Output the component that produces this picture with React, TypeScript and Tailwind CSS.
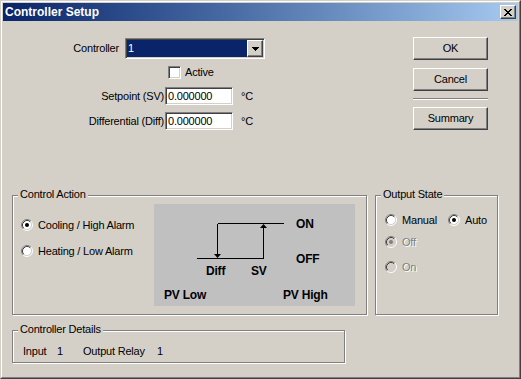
import React from "react";

const sunken =
  "border border-t-[#808080] border-l-[#808080] border-r-white border-b-white shadow-[inset_1px_1px_0_#404040,inset_-1px_-1px_0_#d4d0c8]";
const raised =
  "border border-t-white border-l-white border-r-[#404040] border-b-[#404040] shadow-[inset_-1px_-1px_0_#808080] bg-[#d4d0c8]";

function Radio({ checked, disabled }: { checked?: boolean; disabled?: boolean }) {
  return (
    <svg width="12" height="12" viewBox="0 0 12 12" className="shrink-0">
      <circle cx="6" cy="6" r="4.5" fill={disabled ? "#d4d0c8" : "#fff"} />
      <path d="M2.11 9.89 A5.5 5.5 0 0 1 9.89 2.11" stroke="#808080" fill="none" />
      <path d="M9.89 2.11 A5.5 5.5 0 0 1 2.11 9.89" stroke="#fff" fill="none" />
      <path d="M2.82 9.18 A4.5 4.5 0 0 1 9.18 2.82" stroke="#404040" fill="none" />
      <path d="M9.18 2.82 A4.5 4.5 0 0 1 2.82 9.18" stroke="#d4d0c8" fill="none" />
      {checked && <circle cx="6" cy="6" r="2" fill={disabled ? "#808080" : "#000"} />}
    </svg>
  );
}

function Button({ children }: { children: React.ReactNode }) {
  return (
    <div className={`w-[75px] h-[23px] flex items-center justify-center ${raised}`}>{children}</div>
  );
}

function Group({
  label,
  className,
  children,
}: {
  label: string;
  className: string;
  children?: React.ReactNode;
}) {
  return (
    <div
      className={`relative border border-[#808080] shadow-[inset_1px_1px_0_#fff,1px_1px_0_#fff] ${className}`}
    >
      <div className="absolute left-[5px] -top-[8px] px-[2px] leading-[13px] bg-[#d4d0c8]">{label}</div>
      {children}
    </div>
  );
}

function Disabled({ children }: { children: React.ReactNode }) {
  return <span className="text-[#808080] [text-shadow:1px_1px_0_#fff]">{children}</span>;
}

export default function App() {
  return (
    <div className="w-[521px] h-[379px] bg-[#d4d0c8] border border-t-[#d4d0c8] border-l-[#d4d0c8] border-r-[#404040] border-b-[#404040] text-[11px] leading-[13px] tracking-[-0.2px] text-black font-['Liberation_Sans',Arial,sans-serif]">
      <div className="h-full border border-t-white border-l-white border-r-[#808080] border-b-[#808080] p-px flex flex-col">
        {/* Title bar */}
        <div className="h-[18px] shrink-0 flex items-center justify-between bg-linear-to-r from-[#0a246a] to-[#a6caf0]">
          <span className="pl-[2px] text-white font-bold text-[12px] tracking-normal">Controller Setup</span>
          <div className={`mr-[2px] w-[16px] h-[14px] flex items-center justify-center ${raised}`}>
            <svg width="8" height="7" viewBox="0 0 8 7">
              <path
                d="M0 0h2v1H0zM6 0h2v1H6zM1 1h2v1H1zM5 1h2v1H5zM2 2h4v1H2zM3 3h2v1H3zM2 4h4v1H2zM1 5h2v1H1zM5 5h2v1H5zM0 6h2v1H0zM6 6h2v1H6z"
                fill="#000"
              />
            </svg>
          </div>
        </div>

        {/* Body */}
        <div className="flex-1 flex flex-col">
          {/* Top section */}
          <div className="flex pt-[16px]">
            <div className="w-[410px] pt-px flex flex-col">
              <div className="flex items-center h-[21px]">
                <div className="w-[116px] text-right">Controller</div>
                <div className={`ml-[6px] w-[140px] h-[21px] bg-white p-px flex ${sunken}`}>
                  <div className="flex-1 bg-[#0a246a] text-white pl-px flex items-center">1</div>
                  <div className={`w-[16px] h-full flex items-center justify-center ${raised}`}>
                    <svg width="7" height="4" viewBox="0 0 7 4">
                      <path d="M0 0h7v1H0zM1 1h5v1H1zM2 2h3v1H2zM3 3h1v1H3z" fill="#000" />
                    </svg>
                  </div>
                </div>
              </div>
              <div className="flex items-center mt-[7px] h-[13px]">
                <div className="w-[165px]" />
                <div className={`w-[13px] h-[13px] bg-white ${sunken}`} />
                <span className="ml-[4px]">Active</span>
              </div>
              <div className="flex items-center mt-[8px] h-[18px]">
                <div className="w-[161px] text-right">Setpoint (SV)</div>
                <div className={`ml-px w-[68px] h-[18px] bg-white pl-[2px] flex items-center ${sunken}`}>
                  0.000000
                </div>
                <span className="ml-[8px]">°C</span>
              </div>
              <div className="flex items-center mt-[7px] h-[18px]">
                <div className="w-[161px] text-right">Differential (Diff)</div>
                <div className={`ml-px w-[68px] h-[18px] bg-white pl-[2px] flex items-center ${sunken}`}>
                  0.000000
                </div>
                <span className="ml-[8px]">°C</span>
              </div>
            </div>
            <div className="w-[75px] flex flex-col">
              <Button>OK</Button>
              <div className="mt-[8px]">
                <Button>Cancel</Button>
              </div>
              <div className="mt-[7px] h-[2px] border-t border-t-[#808080] border-b border-b-white" />
              <div className="mt-[7px]">
                <Button>Summary</Button>
              </div>
            </div>
          </div>

          {/* Groups row */}
          <div className="flex mt-[65px] pl-[9px]">
            <Group label="Control Action" className="w-[355px] h-[120px]">
              <div className="flex pt-[8px] pl-[8px]">
                <div className="w-[133px] pt-[15px] flex flex-col">
                  <div className="flex items-center h-[12px] gap-[5px]">
                    <Radio checked />
                    <span>Cooling / High Alarm</span>
                  </div>
                  <div className="flex items-center h-[12px] gap-[5px] mt-[14px]">
                    <Radio />
                    <span>Heating / Low Alarm</span>
                  </div>
                </div>
                <svg
                  width="201"
                  height="102"
                  viewBox="0 0 201 102"
                  className="bg-[#c0c0c0] shrink-0"
                  fontFamily="'Liberation Sans', Arial, sans-serif"
                  fontWeight="bold"
                  fontSize="12"
                >
                  <g stroke="#000" strokeWidth="1" fill="none" shapeRendering="crispEdges">
                    <path d="M63.5 19.5H130" />
                    <path d="M63.5 19.5V50" />
                    <path d="M43 54.5H110" />
                    <path d="M109.5 54.5V24" />
                  </g>
                  <polygon points="60,50 67,50 63.5,54" fill="#000" />
                  <polygon points="106,24 113,24 109.5,20" fill="#000" />
                  <text x="142" y="24" fill="#000">ON</text>
                  <text x="142" y="59" fill="#000">OFF</text>
                  <text x="52" y="71" fill="#000">Diff</text>
                  <text x="97" y="71" fill="#000">SV</text>
                  <text x="10" y="95" fill="#000">PV Low</text>
                  <text x="129" y="95" fill="#000">PV High</text>
                </svg>
              </div>
            </Group>
            <Group label="Output State" className="ml-[8px] w-[123px] h-[120px]">
              <div className="pt-[18px] pl-[9px] flex flex-col">
                <div className="flex items-center h-[12px]">
                  <div className="w-[63px] flex items-center gap-[5px]">
                    <Radio />
                    <span>Manual</span>
                  </div>
                  <div className="flex items-center gap-[5px]">
                    <Radio checked />
                    <span>Auto</span>
                  </div>
                </div>
                <div className="flex items-center h-[12px] gap-[5px] mt-[10px]">
                  <Radio checked disabled />
                  <Disabled>Off</Disabled>
                </div>
                <div className="flex items-center h-[12px] gap-[5px] mt-[13px]">
                  <Radio disabled />
                  <Disabled>On</Disabled>
                </div>
              </div>
            </Group>
          </div>

          <div className="flex mt-[15px] pl-[9px]">
            <Group label="Controller Details" className="w-[333px] h-[33px]">
              <div className="flex pt-[14px] pl-[10px]">
                <span className="w-[34px]">Input</span>
                <span className="w-[26px]">1</span>
                <span className="w-[74px]">Output Relay</span>
                <span>1</span>
              </div>
            </Group>
          </div>
        </div>
      </div>
    </div>
  );
}
